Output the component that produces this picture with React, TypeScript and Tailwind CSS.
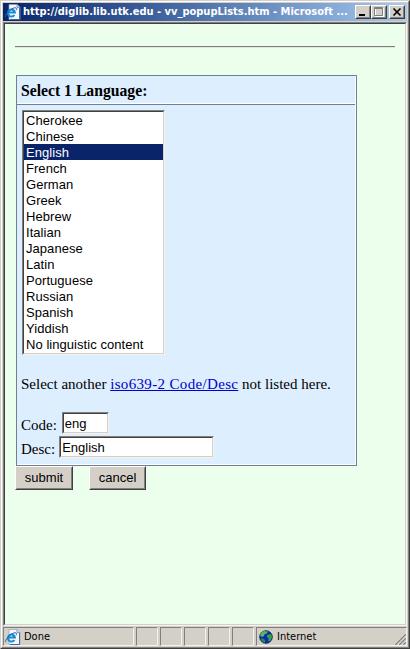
import React from "react";

const languages = [
  "Cherokee", "Chinese", "English", "French", "German", "Greek", "Hebrew", "Italian",
  "Japanese", "Latin", "Portuguese", "Russian", "Spanish", "Yiddish", "No linguistic content",
];

const sunken =
  "border border-t-[#808080] border-l-[#808080] border-r-[#f4f2ee] border-b-[#f4f2ee]";
const sunkenInner =
  "border border-t-[#404040] border-l-[#404040] border-r-[#d4d0c8] border-b-[#d4d0c8]";
const raised =
  "border border-t-white border-l-white border-r-[#404040] border-b-[#404040]";
const raisedInner =
  "border border-t-[#d4d0c8] border-l-[#d4d0c8] border-r-[#808080] border-b-[#808080] bg-[#d4d0c8]";

function PageIcon({ className }: { className: string }) {
  return (
    <svg viewBox="0 0 16 16" className={className}>
      <path d="M4 .5h8l3 3v12H4z" fill="#f5f7fa" stroke="#8ba5c8" strokeWidth=".7" />
      <path d="M12 .5v3h3" fill="#d5dfee" stroke="#557bac" strokeWidth=".7" />
      <path d="M14.5 4v11.5H5" fill="none" stroke="#315d9b" strokeWidth=".9" />
      <path d="M9.4 11A3.5 3.5 0 1 1 9.9 8.5H3.4" fill="none" stroke="#168bd3" strokeWidth="2" />
      <path d="M.8 13.2C-.6 11.5 5 4.2 10 3.8c2-.1 2.1 1 1.1 2.4" fill="none" stroke="#2365ae" strokeWidth="1" />
    </svg>
  );
}

function Globe() {
  return (
    <svg viewBox="0 0 14 14" className="h-3.5 w-3.5 shrink-0">
      <circle cx="7" cy="7" r="6.3" fill="#1328b0" stroke="#101b3d" strokeWidth=".8" />
      <path d="M2 3l3-2 4 .4-1.2 2L6 4 4 7 1 6z" fill="#55bd52" />
      <path d="M8 5l4-1 1.2 3-2 4-2 .4.4-3L8 7z" fill="#2da44b" />
      <path d="M2 8l3 1 1.5 2-1 2-3-2z" fill="#228c4c" />
    </svg>
  );
}

function WindowButton({ children }: { children: React.ReactNode }) {
  return (
    <div className={`h-[14px] w-4 ${raised}`}>
      <div className={`flex h-full w-full items-center justify-center ${raisedInner}`}>{children}</div>
    </div>
  );
}

function PushButton({ label, width }: { label: string; width: string }) {
  return (
    <button className={`h-6 ${width} ${raised}`}>
      <span className={`flex h-full w-full items-center justify-center ${raisedInner}`}>{label}</span>
    </button>
  );
}

export default function App() {
  return (
    <div className="flex h-[649px] w-[410px] flex-col overflow-hidden border border-t-[#d4d0c8] border-r-[#404040] border-b-[#404040] border-l-[#d4d0c8] bg-[#d4d0c8] text-black">
      <div className="flex min-h-0 flex-1 flex-col border border-t-white border-r-[#808080] border-b-[#808080] border-l-white px-px pt-px">
        <header className="flex h-[18px] shrink-0 items-center bg-linear-to-r from-[#0a246a] to-[#a6caf0] pr-[2px] pl-[2px]">
          <PageIcon className="h-4 w-4 shrink-0" />
          <span className="ml-[2px] flex-1 whitespace-nowrap font-['DejaVu_Sans_Condensed','DejaVu_Sans',sans-serif] text-[11px] font-bold leading-4 text-white">
            http://diglib.lib.utk.edu - vv_popupLists.htm - Microsoft ...
          </span>
          <div className="flex">
            <WindowButton>
              <svg viewBox="0 0 12 10" className="h-2.5 w-3"><path d="M2 7h6v2H2z" /></svg>
            </WindowButton>
            <WindowButton>
              <svg viewBox="0 0 12 10" className="h-2.5 w-3" fill="none">
                <path d="M2.5 1.5h8v8h-8z" stroke="white" /><path d="M1.5.5h8v8h-8zM1.5 1.5h8" stroke="#808080" />
              </svg>
            </WindowButton>
            <div className="ml-[2px]">
              <WindowButton>
                <svg viewBox="0 0 12 10" className="h-2.5 w-3"><path d="M2.5 1.5l7 7m0-7l-7 7" stroke="black" strokeWidth="1.6" /></svg>
              </WindowButton>
            </div>
          </div>
        </header>

        <div className={`mt-px h-[604px] shrink-0 ${sunken}`}>
          <main className={`h-full bg-[#ecffec] pt-[22px] pl-[10px] font-['Liberation_Serif','Times_New_Roman',serif] ${sunkenInner}`}>
            <hr className="h-[2px] w-[380px] border-t border-b border-t-[#808080] border-b-[#dce9dc]" />
            <section className="mt-[27px] ml-px h-[391px] w-[341px] border border-[#708090] bg-[#ddeeff]">
              <div className="h-full border-r border-b border-white">
                <h1 className="h-[28px] border-b border-white pl-[4px] text-[15.7px] font-bold leading-[29px]">Select 1 Language:</h1>
                <div className="border-t border-[#708090] pt-[5px] pl-[4px]">
                  <div className={`ml-px h-[245px] w-[143px] ${sunken}`}>
                    <ul className={`h-full bg-white font-['Liberation_Sans',Arial,sans-serif] text-[13px] leading-[18px] tracking-[0.05px] ${sunkenInner}`}>
                      {languages.map((l) => (
                        <li key={l} className={`h-4 whitespace-nowrap pl-[2px] ${l === "English" ? "bg-[#0a246a] text-white" : ""}`}>{l}</li>
                      ))}
                    </ul>
                  </div>
                  <p className="mt-[19px] h-5 whitespace-nowrap text-[15px] leading-5">
                    Select another <a href="#" className="tracking-[0.34px] text-[#0000cc] underline">iso639-2 Code/Desc</a> not listed here.
                  </p>
                  <label className="mt-[18px] flex h-6 items-start text-[15px]">
                    <span className="mt-[3px] mr-[5px] leading-5">Code:</span>
                    <span className={`h-[22px] w-[47px] ${sunken}`}>
                      <input defaultValue="eng" className={`block h-full w-full bg-white px-px pt-px font-['Liberation_Sans',Arial,sans-serif] text-[13px] outline-none ${sunkenInner}`} />
                    </span>
                  </label>
                  <label className="flex h-6 items-start text-[15px]">
                    <span className="mt-[3px] mr-1 leading-5">Desc:</span>
                    <span className={`h-[22px] w-[155px] ${sunken}`}>
                      <input defaultValue="English" className={`block h-full w-full bg-white px-px pt-px font-['Liberation_Sans',Arial,sans-serif] text-[13px] outline-none ${sunkenInner}`} />
                    </span>
                  </label>
                </div>
              </div>
            </section>
            <div className="flex gap-4 font-['Liberation_Sans',Arial,sans-serif] text-[13px] leading-4">
              <PushButton label="submit" width="w-[58px]" />
              <PushButton label="cancel" width="w-[57px]" />
            </div>
          </main>
        </div>

        <footer className="mt-px flex h-[19px] shrink-0 gap-[2px] font-['DejaVu_Sans_Condensed','DejaVu_Sans',sans-serif] text-[11px] leading-4">
          <div className={`flex w-[131px] items-center ${sunken}`}>
            <PageIcon className="ml-px h-4 w-4" />
            <span className="ml-[3px]">Done</span>
          </div>
          <div className={`w-[22px] ${sunken}`} />
          <div className={`w-[22px] ${sunken}`} />
          <div className={`w-[22px] ${sunken}`} />
          <div className={`w-[22px] ${sunken}`} />
          <div className={`w-[22px] ${sunken}`} />
          <div className={`flex flex-1 items-center pl-[2px] ${sunken}`}>
            <Globe />
            <span className="ml-1 flex-1">Internet</span>
            <svg viewBox="0 0 12 12" className="h-3 w-3 self-end" fill="none">
              <path d="M0 12L12 0M4 12l8-8M8 12l4-4" stroke="white" />
              <path d="M1 12L12 1M5 12l7-7M9 12l3-3" stroke="#808080" strokeWidth="1.4" />
            </svg>
          </div>
        </footer>
      </div>
    </div>
  );
}
